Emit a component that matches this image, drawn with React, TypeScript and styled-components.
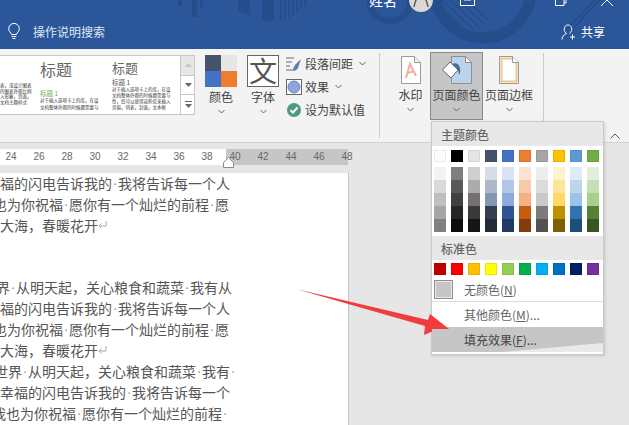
import React from 'react';
import styled, { createGlobalStyle } from 'styled-components';

const cjk = `"Noto Sans CJK SC", "Liberation Sans", sans-serif`;

const themeBase = ['#ffffff', '#000000', '#e7e6e6', '#44546a', '#4472c4', '#ed7d31', '#a5a5a5', '#ffc000', '#5b9bd5', '#70ad47'];
const themeShades = [
    ['#f2f2f2', '#d9d9d9', '#bfbfbf', '#a6a6a6', '#808080'],
    ['#7f7f7f', '#595959', '#404040', '#262626', '#0d0d0d'],
    ['#d0cece', '#aeabab', '#757070', '#3a3838', '#171616'],
    ['#d6dce5', '#adb9ca', '#8497b0', '#333f50', '#222a35'],
    ['#d9e2f3', '#b4c6e7', '#8eaadb', '#2f5496', '#1f3864'],
    ['#fbe4d5', '#f7caac', '#f4b183', '#c55a11', '#833c0b'],
    ['#ededed', '#dbdbdb', '#c9c9c9', '#7b7b7b', '#525252'],
    ['#fff2cc', '#ffe599', '#ffd966', '#bf9000', '#7f6000'],
    ['#deeaf6', '#bdd6ee', '#9cc2e5', '#2e74b5', '#1f4e79'],
    ['#e2efd9', '#c5e0b3', '#a8d08d', '#538135', '#375623'],
];
const standard = ['#c00000', '#ff0000', '#ffc000', '#ffff00', '#92d050', '#00b050', '#00b0f0', '#0070c0', '#002060', '#7030a0'];
const rulerNumbers = [24, 26, 28, 30, 32, 34, 36, 38, 40, 42, 44, 46, 48];

const docLines: { shift: number; parts: string[]; mark?: boolean }[] = [
    { shift: 0, parts: ['福的闪电告诉我的', '我将告诉每一个人'] },
    { shift: -7, parts: ['也为你祝福', '愿你有一个灿烂的前程', '愿'] },
    { shift: 0, parts: ['大海，春暖花开'], mark: true },
    { shift: 0, parts: [] },
    { shift: 0, parts: [] },
    { shift: -4, parts: ['界', '从明天起，关心粮食和蔬菜', '我有从'] },
    { shift: 0, parts: ['福的闪电告诉我的', '我将告诉每一个人'] },
    { shift: -7, parts: ['也为你祝福', '愿你有一个灿烂的前程', '愿'] },
    { shift: 0, parts: ['大海，春暖花开'], mark: true },
    { shift: -6, parts: ['世界', '从明天起，关心粮食和蔬菜', '我有', ''] },
    { shift: 0, parts: ['幸福的闪电告诉我的', '我将告诉每一个'] },
    { shift: -8, parts: ['我也为你祝福', '愿你有一个灿烂的前程', ''] },
];

const GlobalStyle = createGlobalStyle`
    html, body {
        margin: 0;
        padding: 0;
        background: #e6e6e6;
    }
`;

const Window = styled.div`
    position: relative;
    width: 629px;
    height: 425px;
    overflow: hidden;
    font-family: ${cjk};
    background: #e6e6e6;
`;

const TitleBar = styled.header`
    position: relative;
    height: 49px;
    background: #2b579a;
    display: flex;
    flex-direction: column;
    overflow: hidden;
`;

const Decoration = styled.svg`
    position: absolute;
    left: 0;
    top: 0;
`;

const TopRow = styled.div`
    position: relative;
    height: 12px;
    display: flex;
    align-items: flex-end;
    overflow: hidden;
    padding-left: 369px;
`;

const UserName = styled.span`
    color: #fff;
    font-size: 14px;
    line-height: 14px;
    margin-bottom: 5px;
    width: 40px;
    flex-shrink: 0;
`;

const Avatar = styled.span`
    width: 24px;
    height: 24px;
    flex-shrink: 0;
    border-radius: 50%;
    background: #dcd8d6;
    display: flex;
    align-items: center;
    justify-content: center;
`;

const WindowButton = styled.svg<{ $gap: number }>`
    flex-shrink: 0;
    margin-left: ${(p) => p.$gap}px;
    margin-bottom: 6px;
`;

const SearchRow = styled.div`
    position: relative;
    height: 37px;
    display: flex;
    align-items: center;
    padding: 2px 24px 0 8px;
    box-sizing: border-box;
    color: #dfe7f3;
    font-size: 12px;
`;

const SearchText = styled.span`
    margin-left: 13px;
    flex: 1;
`;

const ShareText = styled.span`
    margin-left: 6px;
    color: #fff;
`;

const Ribbon = styled.section`
    position: relative;
    height: 94px;
    background: #f3f3f3;
    border-bottom: 1px solid #d2d2d2;
    box-sizing: border-box;
    display: flex;
    align-items: flex-start;
    color: #444;
`;

const Gallery = styled.div`
    width: 195px;
    height: 60px;
    margin-top: 6px;
    flex-shrink: 0;
    box-sizing: border-box;
    background: #fff;
    border: 1px solid #c6c6c6;
    border-left: 0;
    display: flex;
    overflow: hidden;
`;

const StyleCard = styled.div<{ $width: number }>`
    width: ${(p) => p.$width}px;
    flex-shrink: 0;
    display: flex;
    flex-direction: column;
    align-items: flex-start;
    overflow: hidden;
`;

const StyleTitle = styled.div<{ $size: number; $top: number }>`
    font-size: ${(p) => p.$size}px;
    line-height: 1.2;
    margin-top: ${(p) => p.$top}px;
    color: #666;
`;

const StyleHeading = styled.div<{ $green?: boolean; $top: number }>`
    font-size: 6.5px;
    line-height: 8px;
    margin-top: ${(p) => p.$top}px;
    color: ${(p) => (p.$green ? '#70ad47' : '#555')};
`;

const StyleBody = styled.div<{ $top?: number; $leading: number }>`
    font-size: 4.5px;
    line-height: ${(p) => p.$leading}px;
    margin-top: ${(p) => p.$top ?? 0}px;
    color: #333;
    white-space: nowrap;
`;

const ScrollColumn = styled.div`
    width: 14px;
    flex-shrink: 0;
    display: flex;
    flex-direction: column;
    border-left: 1px solid #c6c6c6;
`;

const ScrollButton = styled.div<{ $disabled?: boolean }>`
    flex: 1;
    display: flex;
    align-items: center;
    justify-content: center;
    background: ${(p) => (p.$disabled ? '#e6e6e6' : '#fff')};
    & + & {
        border-top: 1px solid #c6c6c6;
    }
`;

const ThemeGroup = styled.div`
    display: flex;
    margin-left: 3px;
    margin-top: 3px;
    flex-shrink: 0;
`;

const RibbonButton = styled.div<{ $width: number; $active?: boolean }>`
    width: ${(p) => p.$width}px;
    height: 68px;
    box-sizing: border-box;
    display: flex;
    flex-direction: column;
    align-items: center;
    padding-top: 2px;
    flex-shrink: 0;
    border: 1px solid ${(p) => (p.$active ? '#8a8a8a' : 'transparent')};
    background: ${(p) => (p.$active ? '#c6c6c6' : 'transparent')};
`;

const ButtonLabel = styled.span`
    font-size: 12px;
    line-height: 16px;
    margin-top: 2px;
    white-space: nowrap;
    color: #444;
`;

const ColorTiles = styled.div`
    width: 32px;
    height: 32px;
    display: grid;
    grid-template-columns: 1fr 1fr;
    grid-template-rows: 1fr 1fr;
    flex-shrink: 0;
`;

const Tile = styled.span<{ $color: string }>`
    background: ${(p) => p.$color};
`;

const FontTile = styled.div`
    width: 32px;
    height: 32px;
    box-sizing: border-box;
    border: 1px solid #666;
    background: #fff;
    color: #555;
    font-size: 28px;
    line-height: 29px;
    text-align: center;
    overflow: hidden;
    flex-shrink: 0;
`;

const OptionColumn = styled.div`
    width: 93px;
    padding: 6px 0 0 4px;
    display: flex;
    flex-direction: column;
    gap: 6px;
    flex-shrink: 0;
`;

const OptionRow = styled.div`
    height: 17px;
    display: flex;
    align-items: center;
    font-size: 12px;
    color: #444;
    gap: 3px;
    white-space: nowrap;
    & > svg + svg {
        margin-left: 3px;
    }
`;

const GroupDivider = styled.div<{ $left: number }>`
    width: 1px;
    height: 85px;
    margin: 4px 0 0 ${(p) => p.$left}px;
    background: #c9c9c9;
    flex-shrink: 0;
`;

const PageGroup = styled.div`
    display: flex;
    align-items: flex-start;
    margin-left: 11px;
    margin-top: 3px;
    flex-shrink: 0;
`;

const Collapse = styled.svg`
    position: absolute;
    right: 9px;
    bottom: 3px;
`;

const Ruler = styled.div`
    margin-top: 6px;
    width: 348px;
    height: 16px;
    position: relative;
    display: flex;
    background: linear-gradient(to right, #fff 226px, #c6c6c6 226px);
`;

const RulerNumber = styled.span`
    width: 28px;
    flex-shrink: 0;
    text-align: center;
    font-family: "Liberation Sans", sans-serif;
    font-size: 10px;
    line-height: 16px;
    color: #666;
    &:first-child {
        margin-left: -3px;
    }
`;

const IndentMarker = styled.svg`
    position: absolute;
    left: 223px;
    top: 157px;
`;

const Page = styled.main`
    margin-top: 8px;
    width: 348px;
    height: 252px;
    background: #fff;
    border-right: 1px solid #c4c4c4;
    overflow: hidden;
    font-size: 14px;
    line-height: 20.9px;
    color: #555;
`;

const DocLine = styled.p<{ $shift: number }>`
    margin: 0 0 0 ${(p) => p.$shift}px;
    height: 20.9px;
    white-space: nowrap;
    display: flex;
    align-items: center;
`;

const SpaceDot = styled.span`
    width: 6px;
    text-align: center;
    font-family: "Liberation Sans", sans-serif;
    color: #999;
    flex-shrink: 0;
`;

const ColorMenu = styled.div`
    position: absolute;
    left: 431px;
    top: 121px;
    width: 173px;
    height: 234px;
    box-sizing: border-box;
    background: #fff;
    border: 1px solid #c9c9c9;
    box-shadow: 1px 1px 3px rgba(0, 0, 0, 0.15);
    display: flex;
    flex-direction: column;
    color: #666;
    font-size: 12px;
`;

const MenuHeader = styled.div<{ $top?: number }>`
    height: 24px;
    background: #e8e8e8;
    line-height: 26px;
    padding-left: 9px;
    margin-top: ${(p) => p.$top ?? 0}px;
    font-weight: 500;
    flex-shrink: 0;
`;

const SwatchGrid = styled.div<{ $top: number }>`
    display: grid;
    grid-template-columns: repeat(10, 12px);
    column-gap: 5px;
    padding-left: 2px;
    margin-top: ${(p) => p.$top}px;
    flex-shrink: 0;
`;

const Swatch = styled.span<{ $color: string }>`
    height: 12px;
    box-sizing: border-box;
    background: ${(p) => p.$color};
    border: 1px solid rgba(0, 0, 0, 0.08);
`;

const ShadeColumn = styled.div`
    display: flex;
    flex-direction: column;
`;

const Shade = styled.span<{ $color: string }>`
    height: 13px;
    background: ${(p) => p.$color};
`;

const NoColorRow = styled.div`
    display: flex;
    align-items: center;
    height: 24px;
    margin-top: 2px;
    padding-left: 2px;
    flex-shrink: 0;
`;

const NoColorBox = styled.span`
    width: 19px;
    height: 19px;
    box-sizing: border-box;
    background: #c6c6c6;
    border: 1px solid #8f8f8f;
    box-shadow: inset 0 0 0 1px #e8e8e8;
    margin-right: 11px;
`;

const MenuDivider = styled.div`
    height: 1px;
    background: #dcdcdc;
    flex-shrink: 0;
`;

const MenuItem = styled.div<{ $active?: boolean }>`
    position: relative;
    height: 25px;
    line-height: 25px;
    padding-left: 32px;
    background: ${(p) => (p.$active ? '#c6c6c6' : 'transparent')};
    color: ${(p) => (p.$active ? '#444' : '#666')};
    flex-shrink: 0;
    ${(p) =>
        p.$active &&
        `&::after {
            content: '';
            position: absolute;
            right: 0;
            bottom: 0;
            width: 100px;
            height: 9px;
            background: #e9e9e9;
            clip-path: polygon(0 100%, 100% 0, 100% 100%);
        }`}
`;

const Arrow = styled.svg`
    position: absolute;
    left: 290px;
    top: 285px;
`;

const ChevronSlot = styled.span`
    display: flex;
    height: 8px;
    margin-top: 2px;
    align-items: center;
`;

const Chevron = () => (
    <svg width="7" height="5" viewBox="0 0 7 5">
        <path d="M.5 1l3 3 3-3" fill="none" stroke="#666" strokeWidth="1" />
    </svg>
);

const App = () => (
    <Window>
        <GlobalStyle />
        <TitleBar>
            <Decoration width="629" height="49" viewBox="0 0 629 49">
                <g fill="#244d8b">
                    <rect x="178" width="4" height="6" />
                    <rect x="192" width="5" height="17" />
                    <rect x="200" width="3" height="7" />
                    <path d="M238 0h12v15l-8-2-4-3z" />
                    <path d="M262 0h12v21l-6 1-6-2z" />
                    <rect x="280" width="2" height="20" />
                    <rect x="284" width="2" height="19" />
                    <rect x="288" width="2" height="18" />
                    <rect x="292" width="2" height="16" />
                    <rect x="296" width="2" height="12" />
                    <rect x="300" width="2" height="9" />
                    <rect x="304" width="2" height="6" />
                </g>
                <circle cx="390" cy="1" r="20" fill="none" stroke="#244d8b" strokeWidth="6" />
                <circle cx="483" cy="-10" r="48" fill="none" stroke="#244d8b" strokeWidth="11" />
                <g stroke="#244d8b" strokeWidth="1.6">
                    <path d="M434 0l34 32M442 0l32 30M450 0l30 28M458 0l26 24M466 0l22 20" />
                    <path d="M566 30 595 0M572 30 600 0M578 22 598 2" />
                </g>
            </Decoration>
            <TopRow>
                <UserName>姓名</UserName>
                <Avatar>
                    <svg width="24" height="24" viewBox="0 0 24 24">
                        <path d="M5 19c1-7 4-11 7-11s6 4 7 11" fill="none" stroke="#555" strokeWidth="1.4" />
                    </svg>
                </Avatar>
                <WindowButton $gap={27} width="15" height="12" viewBox="0 0 15 12">
                    <path d="M.5 0v11.5h14V0M7.500 0v6M4 6h7" fill="none" stroke="#fff" />
                </WindowButton>
                <WindowButton $gap={80} width="13" height="12" viewBox="0 0 13 12">
                    <path d="M.5 2.500h8.500v9H.5zM11 0v9H9" fill="none" stroke="#fff" />
                </WindowButton>
                <WindowButton $gap={33} width="12" height="12" viewBox="0 0 12 12">
                    <path d="M0 0l6 6 6-6M6 6l-6 6M6 6l6 6" fill="none" stroke="#fff" />
                </WindowButton>
            </TopRow>
            <SearchRow>
                <svg width="12" height="17" viewBox="0 0 12 17">
                    <path
                        d="M3.500 11.500C3 9.500 .7 8.500 .7 5.700a5.300 5.300 0 0 1 10.600 0c0 2.800-2.300 3.800-2.800 5.800zM3.700 13.500h4.600M4.500 15.500h3"
                        fill="none"
                        stroke="#fff"
                    />
                </svg>
                <SearchText>操作说明搜索</SearchText>
                <svg width="14" height="16" viewBox="0 0 14 16">
                    <path
                        d="M1 15.500c0-3 2-5 4.500-6-1.500-1-2.300-2.400-2.300-4.300C3.200 3 4.800 1 7 1s3.800 2 3.800 4.200c0 2-1 3.300-2.300 4.300M9 13h5M11.500 10.500v5"
                        fill="none"
                        stroke="#fff"
                    />
                </svg>
                <ShareText>共享</ShareText>
            </SearchRow>
        </TitleBar>

        <Ribbon>
            <Gallery>
                <StyleCard $width={40}>
                    <StyleBody $top={27} $leading={5.6}>
                        表，或设计图表
                        <br />
                        的图表外观比例
                        <br />
                        入形象，页面，
                        <br />
                        文档主题样式
                    </StyleBody>
                </StyleCard>
                <StyleCard $width={72}>
                    <StyleTitle $size={16} $top={4}>标题</StyleTitle>
                    <StyleHeading $green $top={10}>标题 1</StyleHeading>
                    <StyleBody $leading={6.4}>
                        对于插入选项卡上的库，在设
                        <br />
                        文档整体外观的时候都需要与
                    </StyleBody>
                </StyleCard>
                <StyleCard $width={68}>
                    <StyleTitle $size={13} $top={4}>标题</StyleTitle>
                    <StyleHeading $top={2}>标题 1</StyleHeading>
                    <StyleBody $leading={6}>
                        对于插入选项卡上的库，在设
                        <br />
                        文档整体外观的时候都需要与
                        <br />
                        性，您可以使用这些库来插入
                        <br />
                        页眉，列表，封面，文本框
                    </StyleBody>
                </StyleCard>
                <ScrollColumn>
                    <ScrollButton $disabled>
                        <svg width="7" height="4" viewBox="0 0 7 4"><path d="M0 4 3.500 0 7 4z" fill="#c4c4c4" /></svg>
                    </ScrollButton>
                    <ScrollButton>
                        <svg width="7" height="4" viewBox="0 0 7 4"><path d="M0 0h7L3.500 4z" fill="#666" /></svg>
                    </ScrollButton>
                    <ScrollButton>
                        <svg width="7" height="7" viewBox="0 0 7 7"><path d="M0 0h7v1H0zM0 3h7L3.500 7z" fill="#666" /></svg>
                    </ScrollButton>
                </ScrollColumn>
            </Gallery>

            <ThemeGroup>
                <RibbonButton $width={46}>
                    <ColorTiles>
                        <Tile $color="#44546a" />
                        <Tile $color="#e7e6e6" />
                        <Tile $color="#4472c4" />
                        <Tile $color="#ed7d31" />
                    </ColorTiles>
                    <ButtonLabel>颜色</ButtonLabel>
                    <ChevronSlot><Chevron /></ChevronSlot>
                </RibbonButton>
                <RibbonButton $width={38}>
                    <FontTile>文</FontTile>
                    <ButtonLabel>字体</ButtonLabel>
                    <ChevronSlot><Chevron /></ChevronSlot>
                </RibbonButton>
            </ThemeGroup>

            <OptionColumn>
                <OptionRow>
                    <svg width="16" height="16" viewBox="0 0 16 16">
                        <path d="M0 2h8M0 6h6M0 10h4M0 14h6" stroke="#666" fill="none" />
                        <path d="M15 3 9 9l-3 6c3 0 5-1 6-3l1-3z" fill="#5b7fb5" />
                    </svg>
                    段落间距
                    <Chevron />
                </OptionRow>
                <OptionRow>
                    <svg width="16" height="16" viewBox="0 0 16 16">
                        <rect x=".5" y=".5" width="15" height="15" fill="#fff" stroke="#666" />
                        <circle cx="8" cy="8" r="6" fill="#8ea5dc" stroke="#6d84bd" />
                    </svg>
                    效果
                    <Chevron />
                </OptionRow>
                <OptionRow>
                    <svg width="16" height="16" viewBox="0 0 16 16">
                        <circle cx="8" cy="8" r="7" fill="#4f9b80" />
                        <path d="M4.500 8.200 7 10.500l4.500-5" fill="none" stroke="#fff" strokeWidth="2" />
                    </svg>
                    设为默认值
                </OptionRow>
            </OptionColumn>

            <GroupDivider $left={0} />

            <PageGroup>
                <RibbonButton $width={39}>
                    <svg width="24" height="30" viewBox="0 0 24 30">
                        <path d="M2.500 1.500h13l6 6v21h-19z" fill="#fff" stroke="#9a9a9a" />
                        <path d="M15.500 1.500v6h6" fill="#eee" stroke="#9a9a9a" />
                        <path d="M7 23 11 9l6 12M8.500 18l7-2" fill="none" stroke="#eeb4ac" strokeWidth="2.200" />
                    </svg>
                    <ButtonLabel>水印</ButtonLabel>
                    <ChevronSlot><Chevron /></ChevronSlot>
                </RibbonButton>
                <RibbonButton $width={53} $active>
                    <svg width="32" height="30" viewBox="0 0 32 30">
                        <path d="M10.500 1.500h14l6 6v21h-20z" fill="#bcd3ec" stroke="#8f8f8f" />
                        <path d="M24.500 1.500v6h6z" fill="#fff" stroke="#8f8f8f" />
                        <path d="M9 7 1.500 15 10 23l7-8z" fill="#fff" stroke="#666" />
                        <path d="M11 9c4-2 7 0 8 4 .6 2 .4 5-1 7 0-4-2-8-7-11z" fill="#3f6ea3" />
                    </svg>
                    <ButtonLabel>页面颜色</ButtonLabel>
                    <ChevronSlot><Chevron /></ChevronSlot>
                </RibbonButton>
                <RibbonButton $width={52}>
                    <svg width="24" height="30" viewBox="0 0 24 30">
                        <path d="M2.500 1.500h13l6 6v21h-19z" fill="#fff" stroke="#9a9a9a" />
                        <path d="M4.500 3.500h10.500l4.500 5v18h-15z" fill="none" stroke="#ecc88a" strokeWidth="2" />
                        <path d="M15.500 1.500v6h6" fill="#fff" stroke="#9a9a9a" />
                    </svg>
                    <ButtonLabel>页面边框</ButtonLabel>
                    <ChevronSlot><Chevron /></ChevronSlot>
                </RibbonButton>
            </PageGroup>

            <GroupDivider $left={8} />

            <Collapse width="10" height="6" viewBox="0 0 10 6">
                <path d="M.5 5.500 5 1l4.500 4.500" fill="none" stroke="#555" />
            </Collapse>
        </Ribbon>

        <Ruler>
            {rulerNumbers.map((n) => (
                <RulerNumber key={n}>{n}</RulerNumber>
            ))}
        </Ruler>
        <IndentMarker width="11" height="11" viewBox="0 0 11 11">
            <path d="M5.500.7 10.500 5.500v5h-10v-5z" fill="#fff" stroke="#8a8a8a" />
        </IndentMarker>

        <Page>
            {docLines.map((line, i) => (
                <DocLine key={i} $shift={line.shift}>
                    {line.parts.map((part, j) => (
                        <React.Fragment key={j}>
                            {j > 0 && <SpaceDot>·</SpaceDot>}
                            {part}
                        </React.Fragment>
                    ))}
                    {line.mark && (
                        <svg width="9" height="9" viewBox="0 0 9 9">
                            <path d="M8 0v5H1M3.500 2.500 1 5l2.500 2.500" fill="none" stroke="#aaa" />
                        </svg>
                    )}
                </DocLine>
            ))}
        </Page>

        <ColorMenu>
            <MenuHeader>主题颜色</MenuHeader>
            <SwatchGrid $top={4}>
                {themeBase.map((c) => (
                    <Swatch key={c} $color={c} />
                ))}
            </SwatchGrid>
            <SwatchGrid $top={5}>
                {themeShades.map((col) => (
                    <ShadeColumn key={col[0]}>
                        {col.map((c) => (
                            <Shade key={c} $color={c} />
                        ))}
                    </ShadeColumn>
                ))}
            </SwatchGrid>
            <MenuHeader $top={4}>标准色</MenuHeader>
            <SwatchGrid $top={3}>
                {standard.map((c, i) => (
                    <Swatch key={i} $color={c} />
                ))}
            </SwatchGrid>
            <NoColorRow>
                <NoColorBox />
                <span>无颜色(<u>N</u>)</span>
            </NoColorRow>
            <MenuDivider />
            <MenuItem>其他颜色(<u>M</u>)...</MenuItem>
            <MenuItem $active>填充效果(<u>F</u>)...</MenuItem>
        </ColorMenu>

        <Arrow width="165" height="55" viewBox="0 0 165 55">
            <polygon points="6,4 138,35 140,29 159,44 142,44 142,46.500 134,50 135,41" fill="#f23b3b" />
        </Arrow>
    </Window>
);

export default App;
